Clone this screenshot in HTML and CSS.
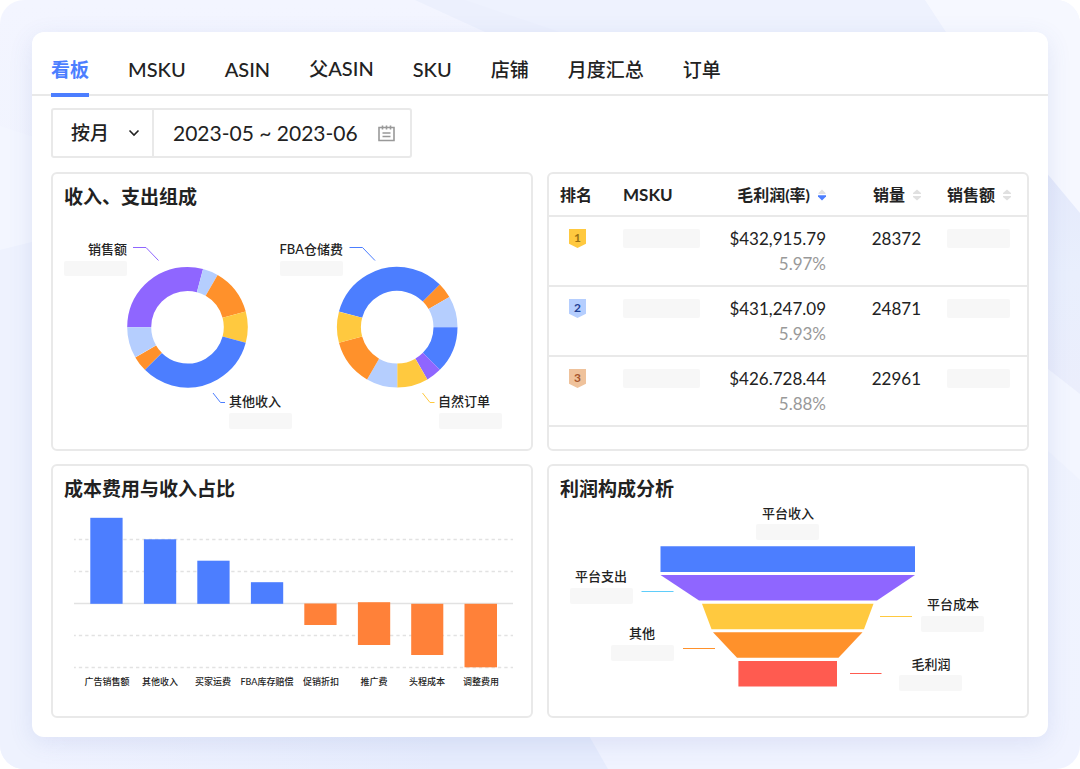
FILE: index.html
```html
<!DOCTYPE html>
<html lang="zh-CN">
<head>
<meta charset="utf-8">
<meta name="viewport" content="width=device-width, initial-scale=1">
<title>利润看板</title>
<link rel="stylesheet" href="styles.css">
</head>
<body>
<div class="stage">
  <svg class="backdrop" viewBox="0 0 1080 769" preserveAspectRatio="none" aria-hidden="true">
    <defs>
      <linearGradient id="base" x1="0" y1="0" x2="0" y2="1">
        <stop offset="0" stop-color="#f3f5ff"/><stop offset="0.5" stop-color="#eff3fe"/><stop offset="1" stop-color="#f0f3ff"/>
      </linearGradient>
      <linearGradient id="side" x1="0" y1="0" x2="0" y2="1">
        <stop offset="0" stop-color="#e4e9fb"/><stop offset="0.5" stop-color="#e9effd"/><stop offset="1" stop-color="#ebeefc"/>
      </linearGradient>
      <linearGradient id="foot" x1="0" y1="0" x2="1" y2="0">
        <stop offset="0" stop-color="#e6ecfd" stop-opacity="0"/><stop offset="0.7" stop-color="#e6ecfd"/>
      </linearGradient>
    </defs>
    <rect width="1080" height="769" fill="url(#base)"/>
    <path d="M415 0H925L946 32H485Z" fill="#ecf0fd"/>
    <path d="M465 0H925L946 32H560Z" fill="#eef2fe"/>
    <path d="M925 0H1080V215L1010 130Z" fill="#f6f8ff"/>
    <path d="M1030 153L1080 213V394L1030 355Z" fill="url(#side)"/>
    <path d="M1030 355L1080 394V480L1030 435Z" fill="#f3f6ff"/>
    <path d="M0 126L40 139V240L0 250Z" fill="#f3f6ff"/>
    <path d="M0 250L40 240V769H0Z" fill="#eef2fe"/>
    <path d="M40 769V720H580L608 769Z" fill="url(#foot)"/>
  </svg>

  <main class="panel">
    <nav class="tabs" aria-label="报表">
      <button class="tab active" type="button">看板</button>
      <button class="tab latin" type="button">MSKU</button>
      <button class="tab latin" type="button">ASIN</button>
      <button class="tab latin" type="button"><span class="han">父</span>ASIN</button>
      <button class="tab latin" type="button">SKU</button>
      <button class="tab" type="button">店铺</button>
      <button class="tab" type="button">月度汇总</button>
      <button class="tab" type="button">订单</button>
    </nav>

    <div class="content">
      <form class="filters">
        <label class="period">
          <select class="period-select" aria-label="统计周期"><option>按月</option><option>按周</option><option>按日</option></select>
          <svg class="chevron" viewBox="0 0 12 8" aria-hidden="true"><path d="M1.5 1.5L6 6L10.500 1.500" fill="none" stroke="#222" stroke-width="1.600"/></svg>
        </label>
        <label class="range">
          <input class="range-input" type="text" aria-label="日期范围" value="2023-05 ~ 2023-06">
          <svg class="calendar" viewBox="0 0 17 17" aria-hidden="true" fill="none" stroke="#999" stroke-width="1.600"><path d="M1 2.500H16V15.500H1ZM4.500 0.500V4.500M8.500 0.500V4.500M12.500 0.500V4.500M4.500 8H12.500M4.500 11.500H12.500"/></svg>
        </label>
      </form>

      <div class="grid">
        <section class="card">
          <h2 class="title">收入、支出组成</h2>
          <svg class="chart" viewBox="53 211 478 238" role="img" aria-label="收入、支出组成">
            <g class="ring">
              <circle cx="187.500" cy="327.200" r="48.300" pathLength="360" stroke="#8f66ff" stroke-dasharray="105 255" transform="rotate(180 187.500 327.200)"/>
              <circle cx="187.500" cy="327.200" r="48.300" pathLength="360" stroke="#b5cefe" stroke-dasharray="15 345" transform="rotate(-75 187.500 327.200)"/>
              <circle cx="187.500" cy="327.200" r="48.300" pathLength="360" stroke="#ff912b" stroke-dasharray="45 315" transform="rotate(-60 187.500 327.200)"/>
              <circle cx="187.500" cy="327.200" r="48.300" pathLength="360" stroke="#ffc93f" stroke-dasharray="30 330" transform="rotate(-15 187.500 327.200)"/>
              <circle cx="187.500" cy="327.200" r="48.300" pathLength="360" stroke="#4c7eff" stroke-dasharray="120 240" transform="rotate(15 187.500 327.200)"/>
              <circle cx="187.500" cy="327.200" r="48.300" pathLength="360" stroke="#ff912b" stroke-dasharray="15 345" transform="rotate(135 187.500 327.200)"/>
              <circle cx="187.500" cy="327.200" r="48.300" pathLength="360" stroke="#b5cefe" stroke-dasharray="30 330" transform="rotate(150 187.500 327.200)"/>
            </g>
            <g class="ring">
              <circle cx="397.200" cy="327.200" r="48.300" pathLength="360" stroke="#4c7eff" stroke-dasharray="120 240" transform="rotate(195 397.200 327.200)"/>
              <circle cx="397.200" cy="327.200" r="48.300" pathLength="360" stroke="#ff912b" stroke-dasharray="15 345" transform="rotate(-45 397.200 327.200)"/>
              <circle cx="397.200" cy="327.200" r="48.300" pathLength="360" stroke="#b5cefe" stroke-dasharray="30 330" transform="rotate(-30 397.200 327.200)"/>
              <circle cx="397.200" cy="327.200" r="48.300" pathLength="360" stroke="#4c7eff" stroke-dasharray="45 315" transform="rotate(0 397.200 327.200)"/>
              <circle cx="397.200" cy="327.200" r="48.300" pathLength="360" stroke="#8f66ff" stroke-dasharray="15 345" transform="rotate(45 397.200 327.200)"/>
              <circle cx="397.200" cy="327.200" r="48.300" pathLength="360" stroke="#ffc93f" stroke-dasharray="30 330" transform="rotate(60 397.200 327.200)"/>
              <circle cx="397.200" cy="327.200" r="48.300" pathLength="360" stroke="#b5cefe" stroke-dasharray="30 330" transform="rotate(90 397.200 327.200)"/>
              <circle cx="397.200" cy="327.200" r="48.300" pathLength="360" stroke="#ff912b" stroke-dasharray="45 315" transform="rotate(120 397.200 327.200)"/>
              <circle cx="397.200" cy="327.200" r="48.300" pathLength="360" stroke="#ffc93f" stroke-dasharray="30 330" transform="rotate(165 397.200 327.200)"/>
            </g>
            <g class="leader">
              <path d="M133 247.500H146L158.500 260.500" stroke="#8f66ff"/>
              <path d="M349.500 247.500H362.500L375 260.500" stroke="#4c7eff"/>
              <path d="M213 393L220.500 402.500H225" stroke="#4c7eff"/>
              <path d="M422.500 393L430 402.500H434.500" stroke="#ffc93f"/>
            </g>
            <g class="blank">
              <rect x="64" y="261" width="63" height="15" rx="2"/>
              <rect x="280" y="261" width="63" height="15" rx="2"/>
              <rect x="229" y="413" width="63" height="16" rx="2"/>
              <rect x="439" y="413" width="63" height="16" rx="2"/>
            </g>
            <g class="label">
              <text x="127" y="254" text-anchor="end">销售额</text>
              <text x="343" y="254" text-anchor="end">FBA仓储费</text>
              <text x="229" y="406">其他收入</text>
              <text x="438" y="406">自然订单</text>
            </g>
          </svg>
        </section>

        <section class="card">
          <table class="ranking">
            <colgroup><col class="c-rank"><col class="c-msku"><col class="c-profit"><col class="c-sales"><col></colgroup>
            <thead>
              <tr>
                <th class="rank" scope="col">排名</th>
                <th class="name" scope="col">MSKU</th>
                <th class="num" scope="col"><button class="sort" type="button">毛利润(率)<svg class="arrows" viewBox="0 0 8 12" aria-hidden="true"><path d="M4 0.500L7.500 4V5H0.500V4Z" fill="#e0e0e0"/><path class="on" d="M4 11.500L8 7.500V6.300H0V7.500Z"/></svg></button></th>
                <th class="num" scope="col"><button class="sort" type="button">销量<svg class="arrows" viewBox="0 0 8 12" aria-hidden="true"><path d="M4 0.500L8 4V5H0V4ZM4 11.500L8 8V7H0V8Z" fill="#e0e0e0"/></svg></button></th>
                <th class="amount" scope="col"><button class="sort" type="button">销售额<svg class="arrows" viewBox="0 0 8 12" aria-hidden="true"><path d="M4 0.500L8 4V5H0V4ZM4 11.500L8 8V7H0V8Z" fill="#e0e0e0"/></svg></button></th>
              </tr>
            </thead>
            <tbody>
              <tr>
                <td class="rank"><span class="badge gold">1</span></td>
                <td class="name"><span class="bone wide"></span></td>
                <td class="num">$432,915.79<div class="rate">5.97%</div></td>
                <td class="num">28372</td>
                <td class="amount"><span class="bone"></span></td>
              </tr>
              <tr>
                <td class="rank"><span class="badge silver">2</span></td>
                <td class="name"><span class="bone wide"></span></td>
                <td class="num">$431,247.09<div class="rate">5.93%</div></td>
                <td class="num">24871</td>
                <td class="amount"><span class="bone"></span></td>
              </tr>
              <tr>
                <td class="rank"><span class="badge bronze">3</span></td>
                <td class="name"><span class="bone wide"></span></td>
                <td class="num">$426.728.44<div class="rate">5.88%</div></td>
                <td class="num">22961</td>
                <td class="amount"><span class="bone"></span></td>
              </tr>
            </tbody>
          </table>
        </section>

        <section class="card">
          <h2 class="title">成本费用与收入占比</h2>
          <svg class="chart" viewBox="53 503 478 213" role="img" aria-label="成本费用与收入占比">
            <path d="M74 539.500H513M74 571.500H513M74 635.500H513M74 667.500H513" fill="none" stroke="#e2e2e2" stroke-width="1.500" stroke-dasharray="3.300 3.050" stroke-dashoffset="1.500"/>
            <path d="M74 603.500H513" stroke="#e2e2e2" stroke-width="1.500"/>
            <g fill="#4c7eff">
              <rect x="90.300" y="517.800" width="32.300" height="86"/>
              <rect x="143.900" y="539.300" width="32.300" height="64.500"/>
              <rect x="197.300" y="560.700" width="32.300" height="43.100"/>
              <rect x="250.900" y="582.200" width="32.300" height="21.600"/>
            </g>
            <g fill="#ff8139">
              <rect x="304.300" y="603.500" width="32.300" height="21.500"/>
              <rect x="357.900" y="602.200" width="32.300" height="42.800"/>
              <rect x="411.200" y="603.800" width="32.100" height="51.200"/>
              <rect x="464.500" y="603.800" width="32.500" height="63.500"/>
            </g>
            <g class="tick">
              <text x="107" y="685">广告销售额</text>
              <text x="160" y="685">其他收入</text>
              <text x="213" y="685">买家运费</text>
              <text x="267" y="685">FBA库存赔偿</text>
              <text x="321" y="685">促销折扣</text>
              <text x="374" y="685">推广费</text>
              <text x="427" y="685">头程成本</text>
              <text x="481" y="685">调整费用</text>
            </g>
          </svg>
        </section>

        <section class="card">
          <h2 class="title">利润构成分析</h2>
          <svg class="chart" viewBox="549 503 478 213" role="img" aria-label="利润构成分析">
            <path d="M660.500 546.300H915V572H660.500Z" fill="#4c7eff"/>
            <path d="M660.500 575H915L877 600.600H699Z" fill="#8f66ff"/>
            <path d="M702 603.800H873.500L864 629.200H711.500Z" fill="#ffc93f"/>
            <path d="M713 632.200H862.500L838.500 657.800H737Z" fill="#ff912b"/>
            <path d="M738.400 660.900H837V686.500H738.400Z" fill="#ff5b50"/>
            <g class="leader">
              <path d="M641.500 591.500H673.500" stroke="#5fcdfa"/>
              <path d="M683 648.500H715" stroke="#ff912b"/>
              <path d="M880 616.500H912" stroke="#ffc93f"/>
              <path d="M850 673.500H881.500" stroke="#ff5b50"/>
            </g>
            <g class="blank">
              <rect x="756" y="524" width="63" height="16" rx="2"/>
              <rect x="570" y="588" width="63" height="16" rx="2"/>
              <rect x="611" y="645" width="63" height="16" rx="2"/>
              <rect x="921" y="616" width="63" height="16" rx="2"/>
              <rect x="899" y="675" width="63" height="16" rx="2"/>
            </g>
            <g class="label centered">
              <text x="788" y="518">平台收入</text>
              <text x="601" y="581">平台支出</text>
              <text x="642" y="638">其他</text>
              <text x="953" y="609">平台成本</text>
              <text x="931" y="669">毛利润</text>
            </g>
          </svg>
        </section>
      </div>
    </div>
  </main>
</div>
</body>
</html>
```
FILE: styles.css
```css
* { box-sizing: border-box; }

body {
  margin: 0;
  background: #fff;
  color: #222;
  font-family: Lato, "Noto Sans CJK SC", sans-serif;
}

button, input, select {
  font: inherit;
  color: inherit;
  background: none;
  border: 0;
  padding: 0;
  margin: 0;
}

.stage {
  position: relative;
  min-height: 100vh;
  padding: 32px;
  border-radius: 24px;
  overflow: hidden;
}

.backdrop {
  position: absolute;
  inset: 0;
  width: 100%;
  height: 100%;
}

.panel {
  position: relative;
  background: #fff;
  border-radius: 12px;
  box-shadow: 0 6px 24px rgba(70, 95, 180, 0.12);
}

.tabs {
  display: flex;
  gap: 39px;
  padding: 23px 19px 0;
  border-bottom: 2px solid #e9e9e9;
}

.tab {
  position: relative;
  padding-bottom: 10px;
  font-size: 19px;
  font-weight: 500;
  line-height: 28px;
  white-space: nowrap;
  cursor: pointer;
}

.tab.latin {
  padding-bottom: 12px;
  font-size: 20px;
  line-height: 26px;
}

.han { font-size: 19px; }

.tab.active {
  color: #4c7eff;
  font-weight: 700;
}

.tab.active::after {
  content: "";
  position: absolute;
  left: 0;
  right: 0;
  bottom: -3px;
  height: 4px;
  background: #4c7eff;
}

.content { padding: 12px 19px 19px; }

.filters {
  display: inline-flex;
  height: 50px;
  border: 2px solid #e9e9e9;
  border-radius: 3px;
  vertical-align: top;
}

.period, .range {
  display: flex;
  align-items: center;
}

.period {
  position: relative;
  border-right: 2px solid #e9e9e9;
}

.period-select {
  appearance: none;
  width: 99px;
  padding-left: 18px;
  font-size: 19px;
  font-weight: 500;
  line-height: 28px;
}

.chevron {
  position: absolute;
  right: 12px;
  width: 12px;
  height: 8px;
  pointer-events: none;
}

.range {
  gap: 13px;
  padding: 0 15px 0 19px;
}

.range-input {
  width: 192px;
  font-size: 21px;
  line-height: 28px;
}

.calendar {
  width: 17px;
  height: 17px;
}

.grid {
  display: grid;
  grid-template-columns: 1fr 1fr;
  gap: 13px 14px;
  margin-top: 14px;
}

.card {
  min-width: 0;
  border: 2px solid #e9e9e9;
  border-radius: 6px;
}

.title {
  margin: 0;
  padding: 9px 11px 0;
  font-size: 19px;
  line-height: 28px;
}

.chart {
  display: block;
  width: 100%;
  height: auto;
}

.ring circle {
  fill: none;
  stroke-width: 24px;
}

.leader {
  fill: none;
  stroke-width: 1px;
}

.blank { fill: #f7f7f7; }

.label {
  font-size: 13px;
  font-weight: 500;
  fill: #222;
}

.centered, .tick { text-anchor: middle; }

.tick {
  font-size: 9px;
  font-weight: 500;
  fill: #222;
}

.ranking {
  width: 100%;
  table-layout: fixed;
  border-collapse: separate;
  border-spacing: 0;
  font-size: 17px;
  line-height: 25px;
}

.c-rank { width: 74px; }
.c-msku { width: 77px; }
.c-profit { width: 126px; }
.c-sales { width: 95px; }

.ranking th, .ranking td {
  padding: 9px 0;
  border-bottom: 2px solid #e9e9e9;
  text-align: left;
  vertical-align: top;
  white-space: nowrap;
}

.ranking th {
  padding: 8px 0;
  font-size: 16px;
}

.ranking th.name { font-size: 17px; }
.ranking .rank { padding-left: 11px; }
.ranking .num { text-align: right; }
.ranking .amount { padding-left: 26px; }

.sort {
  display: inline-flex;
  align-items: center;
  gap: 8px;
  font-weight: 700;
  cursor: pointer;
}

.arrows {
  width: 8px;
  height: 12px;
}

.on { fill: #4c7eff; }
.rate { color: #999; }

.bone {
  display: block;
  width: 63px;
  height: 19px;
  margin-top: 3px;
  border-radius: 2px;
  background: #f7f7f7;
}

.bone.wide { width: 77px; }

.badge {
  display: block;
  width: 17px;
  height: 19px;
  margin: 3px 0 0 9px;
  clip-path: polygon(0 0, 100% 0, 100% 78%, 50% 100%, 0 78%);
  font-size: 12px;
  font-weight: 700;
  line-height: 17px;
  text-align: center;
}

.gold { background: #ffc93f; color: #9a7013; }
.silver { background: #b5cefe; color: #1e3f94; }
.bronze { background: #efc29b; color: #a5552d; }
```
